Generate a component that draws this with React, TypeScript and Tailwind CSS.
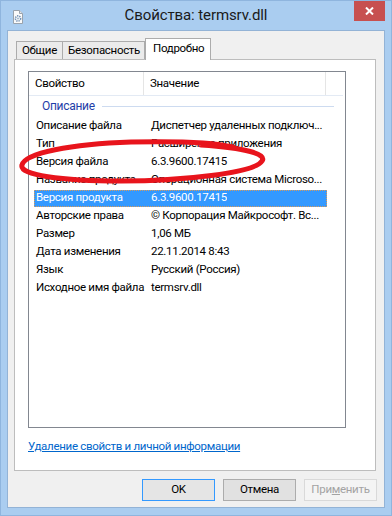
import { FC } from "react";

const rows: [string, string][] = [
  ["Описание файла", "Диспетчер удаленных подключ..."],
  ["Тип", "Расширение приложения"],
  ["Версия файла", "6.3.9600.17415"],
  ["Название продукта", "Операционная система Microso..."],
  ["Версия продукта", "6.3.9600.17415"],
  ["Авторские права", "© Корпорация Майкрософт. Вс..."],
  ["Размер", "1,06 МБ"],
  ["Дата изменения", "22.11.2014 8:43"],
  ["Язык", "Русский (Россия)"],
  ["Исходное имя файла", "termsrv.dll"],
];

const selected = 4;

const DllIcon: FC = () => (
  <svg width="12" height="14" viewBox="0 0 12 14">
    <path d="M1.5 0.5h6l3 3v10h-9z" fill="#fbfbfb" stroke="#9aa3ad" />
    <path d="M7.5 0.5v3h3" fill="#e4e8ec" stroke="#9aa3ad" />
    <circle cx="6" cy="8.5" r="2.6" fill="none" stroke="#6f8fb3" strokeWidth="1.6" strokeDasharray="1.3 0.9" />
    <circle cx="6" cy="8.5" r="1" fill="#9fb6cf" />
  </svg>
);

const App: FC = () => {
  return (
    <div className="relative w-[392px] h-[516px] bg-[#aacdf0] border border-[#8fb5de] flex flex-col font-['Roboto','Liberation_Sans',Arial,sans-serif] text-[11.5px] tracking-[-0.3px] text-black overflow-hidden">
      {/* title bar */}
      <div className="h-[29px] grid grid-cols-[80px_1fr_80px] shrink-0">
        <div className="pl-[11px] pt-[9px]">
          <DllIcon />
        </div>
        <div className="flex items-center justify-center text-[15px] tracking-[-0.1px] text-[#1a1a1a]">Свойства: termsrv.dll</div>
        <div className="flex justify-end pr-[6px] -mt-px">
          <div className="w-[31px] h-[21px] bg-[#c75050] flex items-center justify-center">
            <svg width="9" height="8" viewBox="0 0 9 8">
              <path d="M1 0.5l7 7M8 0.5l-7 7" stroke="#fff" strokeWidth="2" />
            </svg>
          </div>
        </div>
      </div>

      {/* client */}
      <div className="mx-[6px] h-[478px] border border-[#93b3d6] bg-[#f0f0f0] flex flex-col">
        <div className="ml-[6px] w-[362px] pt-[7px]">
          {/* tabs */}
          <div className="relative z-10 h-[21px] flex items-end pl-[2px]">
            <div className="h-[18px] w-[47px] border border-b-0 border-[#acacac] bg-[#ebebeb] flex items-center pl-[5px]">Общие</div>
            <div className="h-[18px] w-[82px] border border-b-0 border-l-0 border-[#acacac] bg-[#ebebeb] flex items-center pl-[5px]">Безопасность</div>
            <div className="h-[22px] w-[66px] -mb-px border border-b-0 border-[#acacac] bg-white flex items-center pl-[7px] pb-[2px]">Подробно</div>
          </div>

          {/* tab page */}
          <div className="h-[412px] bg-white border border-[#bdbdbd] flex flex-col">
            <div className="ml-[13px] mt-[11px] w-[318px] h-[357px] border border-[#828790] bg-white flex flex-col">
              {/* header */}
              <div className="h-[24px] flex border-b border-[#e3eaf4] mr-[2px]">
                <div className="w-[115px] border-r border-[#e5e5e5] flex items-center pl-[6px]">Свойство</div>
                <div className="w-[182px] border-r border-[#e5e5e5] flex items-center pl-[6px]">Значение</div>
                <div className="flex-1" />
              </div>
              {/* group */}
              <div className="h-[21px] flex items-center pb-[1px] pl-[13px] pr-[11px] gap-[7px]">
                <span className="text-[#1e3ea8] text-[12px]">Описание</span>
                <div className="flex-1 h-px bg-[#cddbf0]" />
              </div>
              {rows.map(([k, v], i) => (
                <div key={k} className="h-[18px] flex items-center">
                  {i === selected ? (
                    <div className="ml-[5px] w-[293px] h-[17px] bg-[#3399ff] border border-dotted border-[#d89a5a] text-white flex items-center">
                      <div className="w-[110px] pl-[1px] whitespace-nowrap overflow-hidden">{k}</div>
                      <div className="pl-[6px] whitespace-nowrap overflow-hidden">{v}</div>
                    </div>
                  ) : (
                    <>
                      <div className="w-[116px] pl-[7px] whitespace-nowrap overflow-hidden">{k}</div>
                      <div className="w-[182px] pl-[6px] whitespace-nowrap overflow-hidden">{v}</div>
                    </>
                  )}
                </div>
              ))}
            </div>
            <div className="ml-[13px] mt-[11px] leading-[15px]">
              <span className="text-[#0066cc] underline">Удаление свойств и личной информации</span>
            </div>
          </div>

          {/* buttons */}
          <div className="mt-[8px] flex justify-end gap-[8px] -mr-[1px]">
            <div className="w-[73px] h-[22px] border border-[#3399ff] bg-[#e5e5e5] flex items-center justify-center">OK</div>
            <div className="w-[73px] h-[22px] border border-[#acacac] bg-[#e1e1e1] flex items-center justify-center">Отмена</div>
            <div className="w-[73px] h-[22px] border border-[#d9d9d9] bg-[#f4f4f4] text-[#a3a3a3] flex items-center justify-center">
              При<span className="underline">м</span>енить
            </div>
          </div>
        </div>
      </div>

      {/* hand-drawn highlight */}
      <svg className="absolute left-0 top-0 pointer-events-none" width="392" height="516" viewBox="0 0 392 516">
        <path
          d="M200 144 C 245 147, 266 153, 261 160 C 254 172, 180 180, 120 180 C 60 180, 18 174, 21 164 C 24 152, 70 143, 130 141 C 175 140, 215 142, 232 146"
          fill="none"
          stroke="#e8141c"
          strokeWidth="5"
          strokeLinecap="round"
        />
      </svg>
    </div>
  );
};

export default App;
